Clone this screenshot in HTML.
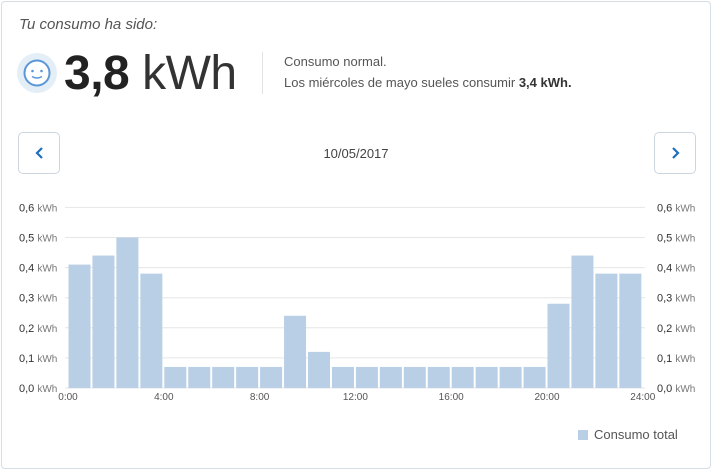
<!DOCTYPE html><html><head><style>
body{margin:0;width:712px;height:470px;background:#fff;font-family:"Liberation Sans",sans-serif;position:relative;overflow:hidden}
.card{position:absolute;left:1px;top:1px;width:708px;height:466px;border:1px solid #d5dde5;border-radius:4px}
.t{position:absolute;left:19px;top:16px;font-size:15px;font-style:italic;color:#555}
.face{position:absolute;left:17px;top:53px;width:40px;height:40px;border-radius:50%;background:#e4eef7}
.big{position:absolute;left:64px;top:46px;font-size:48px;color:#222;letter-spacing:-0.5px}
.big b{font-weight:bold}.big span{font-weight:normal;color:#333}
.sep{position:absolute;left:262px;top:52px;width:1px;height:42px;background:#e2e2e2}
.d{position:absolute;left:284px;font-size:13px;color:#555}
.btn{position:absolute;top:132px;width:40px;height:40px;border:1px solid #ccd6e0;border-radius:5px}
.date{position:absolute;left:0;width:712px;top:146px;text-align:center;font-size:13px;color:#444}
svg text{font-family:"Liberation Sans",sans-serif}
</style></head><body><div class="card"></div>
<div class="t">Tu consumo ha sido:</div>
<div class="face"><svg width="40" height="40"><circle cx="20" cy="20" r="12.5" fill="#fff" stroke="#5b97d6" stroke-width="2"/><circle cx="15.5" cy="18" r="1.3" fill="#5b97d6"/><circle cx="24.5" cy="18" r="1.3" fill="#5b97d6"/><path d="M15 23.5q5 3 10 0" fill="none" stroke="#5b97d6" stroke-width="1.6"/></svg></div>
<div class="big"><b>3,8</b> <span>kWh</span></div>
<div class="sep"></div>
<div class="d" style="top:54px">Consumo normal.</div>
<div class="d" style="top:75px">Los miércoles de mayo sueles consumir <b style="color:#333">3,4 kWh.</b></div>
<div class="btn" style="left:18px"><svg width="40" height="40"><path d="M23 15l-5 5 5 5" fill="none" stroke="#1f6fbf" stroke-width="2.2"/></svg></div>
<div class="btn" style="left:654px"><svg width="40" height="40"><path d="M18 15l5 5-5 5" fill="none" stroke="#1f6fbf" stroke-width="2.2"/></svg></div>
<div class="date">10/05/2017</div>
<svg style="position:absolute;left:0;top:0" width="712" height="470" id="c"></svg>
<script>
var s='',v=[.41,.44,.5,.38,.07,.07,.07,.07,.07,.24,.12,.07,.07,.07,.07,.07,.07,.07,.07,.07,.28,.44,.38,.38];
for(var i=0;i<=6;i++){var y=388-i*30.1;s+='<line x1="65" x2="645" y1="'+y+'" y2="'+y+'" stroke="#e6e6e6"/>';
var l='0,'+i+' ';s+='<text x="19" y="'+(y+4)+'" font-size="11" fill="#333">'+'0,'+i+' <tspan fill="#777" font-size="10">kWh</tspan></text>';
s+='<text x="657" y="'+(y+4)+'" font-size="11" fill="#333">'+'0,'+i+' <tspan fill="#777" font-size="10">kWh</tspan></text>';}
for(i=0;i<24;i++){var h=v[i]*301;s+='<rect x="'+(68.5+i*23.95)+'" y="'+(388-h)+'" width="22" height="'+h+'" fill="#b8cfe6"/>';}
['0:00','4:00','8:00','12:00','16:00','20:00','24:00'].forEach(function(t,k){s+='<text x="'+(68+k*95.8)+'" y="400" font-size="10" fill="#555" text-anchor="middle">'+t+'</text>';});
s+='<rect x="578" y="430" width="10" height="10" fill="#b8cfe6"/><text x="594" y="439" font-size="13" fill="#555">Consumo total</text>';
document.getElementById('c').innerHTML=s;
</script></body></html>
